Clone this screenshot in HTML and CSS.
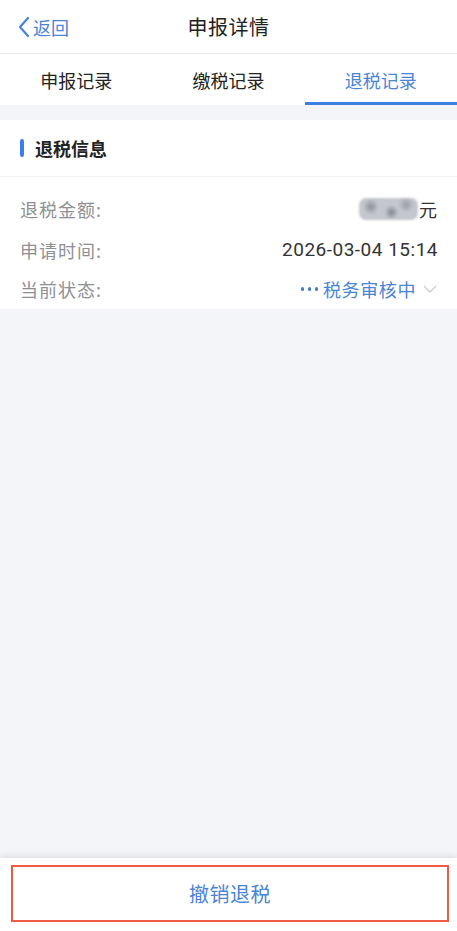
FILE: index.html
```html
<!DOCTYPE html>
<html lang="zh-CN">
<head>
    <meta charset="UTF-8">
    <meta name="viewport" content="width=device-width, initial-scale=1.0">
    <title>申报详情</title>
    <link rel="stylesheet" href="styles.css">
</head>
<body>
    <div class="page">
        <div class="nav-bar">
            <div class="back">
                <svg class="back-icon" width="13" height="22" viewBox="0 0 13 22">
                    <path d="M11 2 L3 11 L11 20" fill="none" stroke="#4a84d6" stroke-width="2.2" stroke-linecap="round" stroke-linejoin="round"/>
                </svg>
                <span>返回</span>
            </div>
            <div class="nav-title">申报详情</div>
        </div>

        <div class="tabs">
            <div class="tab">申报记录</div>
            <div class="tab">缴税记录</div>
            <div class="tab active">退税记录</div>
        </div>

        <div class="content">
            <div class="card">
                <div class="card-head">
                    <span class="mark"></span>
                    <span class="card-title">退税信息</span>
                </div>
                <div class="card-body">
                    <div class="row">
                        <span class="label">退税金额:</span>
                        <span class="value"><span class="masked"></span>元</span>
                    </div>
                    <div class="row">
                        <span class="label">申请时间:</span>
                        <span class="value date">2026-03-04 15:14</span>
                    </div>
                    <div class="row last">
                        <span class="label">当前状态:</span>
                        <span class="value status">
                            <span class="dots"><i></i><i></i><i></i></span>税务审核中
                            <svg class="arrow" width="14" height="10" viewBox="0 0 14 10">
                                <path d="M1 2 L7 8 L13 2" fill="none" stroke="#c8ccd2" stroke-width="1.3"/>
                            </svg>
                        </span>
                    </div>
                </div>
            </div>
        </div>

        <div class="footer">
            <div class="cancel-btn">撤销退税</div>
        </div>
    </div>
</body>
</html>
```

FILE: styles.css
```css
body {
    margin: 0;
    padding: 0;
    font-family: "Noto Sans CJK SC", "Noto Sans", sans-serif;
    background-color: #f3f5f8;
}

.page {
    display: flex;
    flex-direction: column;
    height: 931px;
}

.nav-bar {
    position: relative;
    height: 53px;
    background-color: #ffffff;
    border-bottom: 1px solid #e9eaec;
    display: flex;
    align-items: center;
    justify-content: center;
}

.back {
    position: absolute;
    left: 17px;
    top: 0;
    height: 53px;
    display: flex;
    align-items: center;
    gap: 3px;
    color: #4a84d6;
    font-size: 18px;
}

.nav-title {
    font-size: 20px;
    letter-spacing: 0.5px;
    color: #222222;
}

.tabs {
    display: grid;
    grid-template-columns: 1fr 1fr 1fr;
    height: 51px;
    background-color: #ffffff;
}

.tab {
    display: flex;
    align-items: center;
    justify-content: center;
    font-size: 18px;
    color: #222222;
    border-bottom: 3px solid transparent;
    padding-top: 3px;
}

.tab.active {
    color: #4a84d6;
    border-bottom-color: #3d7fe2;
}

.content {
    flex: 1;
    padding-top: 15px;
}

.card {
    background-color: #ffffff;
}

.card-head {
    height: 56px;
    display: flex;
    align-items: center;
    padding-left: 20px;
    border-bottom: 1px solid #eeeff1;
}

.mark {
    width: 4px;
    height: 18px;
    border-radius: 2px;
    background-color: #3a7ff0;
    margin-right: 11px;
}

.card-title {
    font-size: 18px;
    font-weight: bold;
    color: #222222;
}

.card-body {
    padding: 11px 20px 0;
}

.row {
    height: 41px;
    display: flex;
    align-items: center;
    justify-content: space-between;
    font-size: 18px;
}

.row.last {
    height: 39px;
    align-items: flex-start;
    padding-top: 6px;
    box-sizing: border-box;
}

.label {
    color: #8e9095;
    letter-spacing: 1px;
}

.value {
    color: #333333;
    display: flex;
    align-items: center;
}

.date {
    font-family: Roboto, "Noto Sans CJK SC", sans-serif;
    font-size: 19px;
    letter-spacing: 0.5px;
    margin-right: -1px;
}

.masked {
    display: inline-block;
    width: 59px;
    height: 22px;
    border-radius: 7px;
    background:
        radial-gradient(circle at 20% 40%, #8d9098 0, transparent 8px),
        radial-gradient(circle at 55% 65%, #7f838b 0, transparent 7px),
        radial-gradient(circle at 80% 30%, #9a9da4 0, transparent 8px),
        #c4c7cd;
    filter: blur(1.2px);
    margin-right: 1px;
}

.status {
    color: #4a84d6;
    letter-spacing: 0.6px;
}

.dots {
    display: flex;
    gap: 3.5px;
    margin-right: 5px;
}

.dots i {
    display: block;
    width: 3.5px;
    height: 3.5px;
    border-radius: 50%;
    background-color: #3f7cd4;
}

.arrow {
    margin-left: 7px;
}

.footer {
    height: 73px;
    background-color: #ffffff;
    box-shadow: 0 -3px 6px rgba(0, 0, 0, 0.08);
    padding: 7px 8px 0 11px;
    box-sizing: border-box;
}

.cancel-btn {
    height: 57px;
    border: 2px solid #f05a44;
    box-sizing: border-box;
    display: flex;
    align-items: center;
    justify-content: center;
    font-size: 20px;
    letter-spacing: 0.5px;
    color: #4a84d6;
}
```
